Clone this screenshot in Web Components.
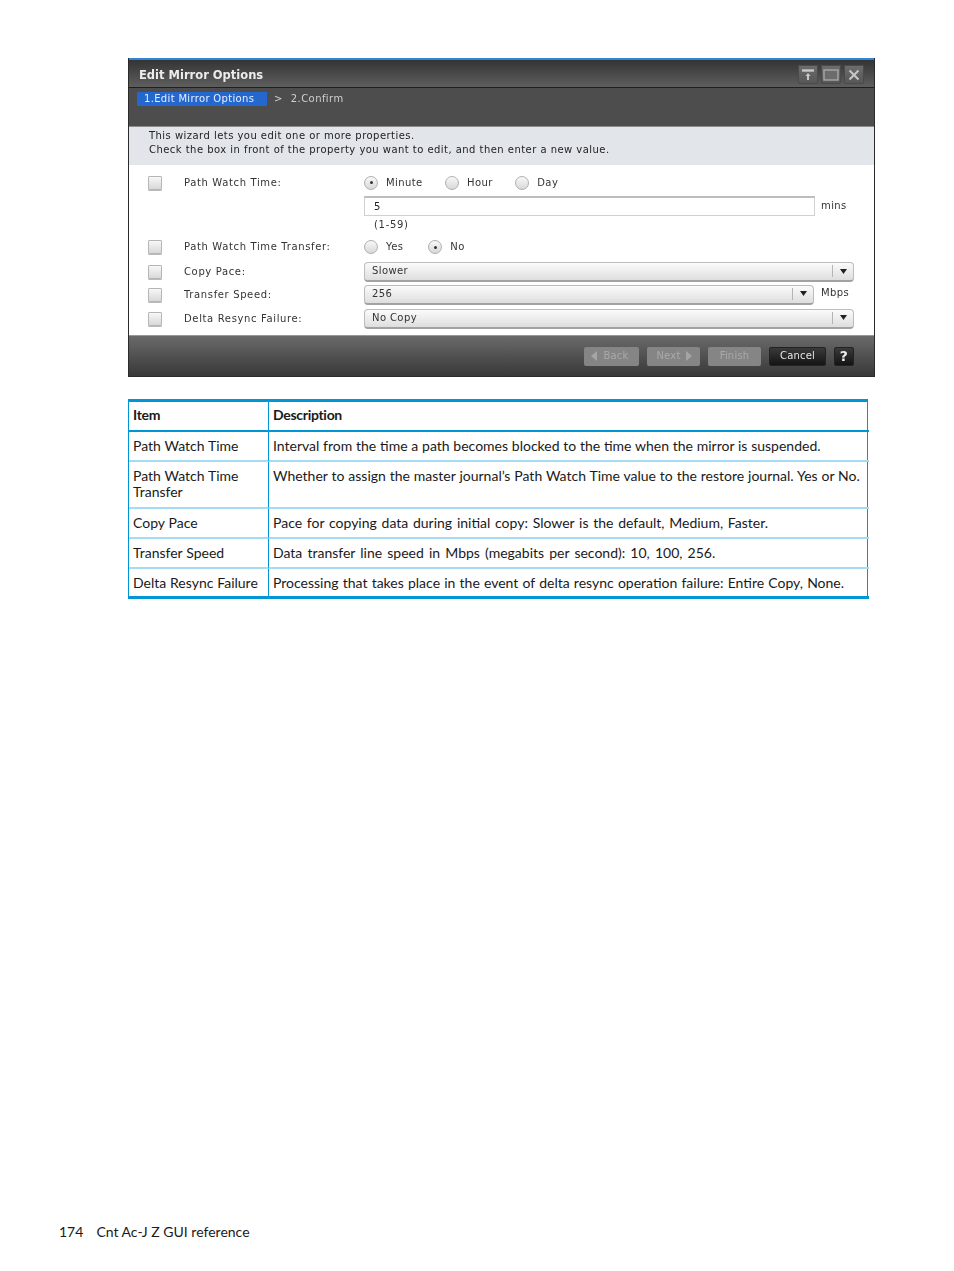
<!DOCTYPE html>
<html lang="en"><head><meta charset="utf-8"><title>Edit Mirror Options</title>
<style>
html,body{margin:0;padding:0;background:#fff}
body{font-family:"Lato","Liberation Sans",sans-serif;color:#1a1a1a}
</style></head><body>
<x-page>
  <x-dialog title-text="Edit Mirror Options">
    <x-row h="23" label="Path Watch Time:">
      <x-radios gap="22.5"><x-radio on>Minute</x-radio><x-radio>Hour</x-radio><x-radio>Day</x-radio></x-radios>
    </x-row>
    <x-row h="23"><x-input value="5" unit="mins"></x-input></x-row>
    <x-row h="15"><x-hint>(1-59)</x-hint></x-row>
    <x-row h="30" label="Path Watch Time Transfer:">
      <x-radios gap="25"><x-radio>Yes</x-radio><x-radio on>No</x-radio></x-radios>
    </x-row>
    <x-row h="19" label="Copy Pace:"><x-select value="Slower"></x-select></x-row>
    <x-row h="27" label="Transfer Speed:"><x-select value="256" unit="Mbps"></x-select></x-row>
    <x-row h="21" label="Delta Resync Failure:"><x-select value="No Copy"></x-select></x-row>
  </x-dialog>
  <x-table>
    <x-cell head>Item</x-cell><x-cell head last>Description</x-cell>
    <x-cell>Path Watch Time</x-cell><x-cell last style="word-spacing:.18px">Interval from the time a path becomes blocked to the time when the mirror is suspended.</x-cell>
    <x-cell tall>Path Watch Time Transfer</x-cell><x-cell tall last style="word-spacing:.3px">Whether to assign the master journal’s Path Watch Time value to the restore journal. Yes or No.</x-cell>
    <x-cell>Copy Pace</x-cell><x-cell last style="word-spacing:1.15px">Pace for copying data during initial copy: Slower is the default, Medium, Faster.</x-cell>
    <x-cell>Transfer Speed</x-cell><x-cell last style="word-spacing:1.55px">Data transfer line speed in Mbps (megabits per second): 10, 100, 256.</x-cell>
    <x-cell end>Delta Resync Failure</x-cell><x-cell end last style="word-spacing:.6px">Processing that takes place in the event of delta resync operation failure: Entire Copy, None.</x-cell>
  </x-table>
  <x-foot></x-foot>
</x-page>
<script>
function def(name,html,init){
  customElements.define(name,class extends HTMLElement{
    constructor(){super();this.attachShadow({mode:'open'}).innerHTML=html;}
    connectedCallback(){if(init)init(this,this.shadowRoot);}
  });
}
const ui='font:10px/12px "DejaVu Sans",sans-serif;';
def('x-page',`<style>:host{display:flex;flex-direction:column;height:1271px;padding:58px 0 0 128px;box-sizing:border-box}</style><slot></slot>`);

def('x-dialog',`<style>
:host{display:block;width:747px;height:319px;box-sizing:border-box;border:1px solid #2b2b2b;border-top:0;${ui}filter:blur(.6px);background:#fff}
.wrap{display:flex;flex-direction:column;height:100%}
.blue{height:2px;background:#2f86d8;flex:none}
.title{height:28px;flex:none;box-sizing:border-box;border-bottom:1px solid #1f1f1f;background:linear-gradient(#343434,#5e5e5e);display:flex;align-items:center;padding:2px 10px 0 10px;justify-content:space-between}
.title b{font:bold 11.5px/14px "DejaVu Sans",sans-serif;color:#ececec}
.btns{display:flex;gap:3px}
.btns span{width:20px;height:19px;border-radius:2px;background:linear-gradient(#6e6e6e,#555);box-shadow:inset 0 0 0 1px #4a4a4a;display:flex;align-items:center;justify-content:center}
.tabs{height:39px;flex:none;box-sizing:border-box;background:#4d4d4d;border-bottom:1px solid #8c8c8c;display:flex;align-items:flex-start;padding:4px 0 0 8px;color:#cfcfcf;letter-spacing:.42px}
.tab{width:130px;height:14px;box-sizing:border-box;background:#2467cf;color:#e6eeff;padding:1px 0 0 7px;white-space:nowrap;letter-spacing:.33px}
.sep{margin:0 8px 0 7px;line-height:14px}.next{line-height:14px}
.intro{height:38px;flex:none;box-sizing:border-box;background:#e2e5ea;padding:2px 0 0 20px;color:#222;line-height:14px;letter-spacing:.46px}
.body{flex:1;padding:6px 0 0 19px;background:#fff;color:#333}
.bar{height:41px;flex:none;box-sizing:border-box;border-top:1px solid #999;background:linear-gradient(#6a6a6a,#383838);display:flex;align-items:center;justify-content:flex-end;padding:0 20px 0 0;gap:8px}
.b{height:19px;box-sizing:border-box;border-radius:2px;display:flex;align-items:center;justify-content:center;gap:5px;background:#858585;color:#a9a9a9;letter-spacing:.2px}
.back{width:55px;padding-right:3px;gap:6px}.nxt{width:53px;padding-left:1px}.fin{width:53px}
.can{width:57px;background:linear-gradient(#3a3a3a,#141414);color:#e5e5e5;border:1px solid #222}
.help{width:20px;background:linear-gradient(#3a3a3a,#141414);color:#eee;font:bold 14px/14px "DejaVu Sans",sans-serif;border:1px solid #222}
</style>
<div class="wrap">
<div class="blue"></div>
<div class="title"><b id="t"></b><div class="btns">
<span><svg width="14" height="12" viewBox="0 0 14 12"><path d="M1 1.5h12" stroke="#c8c8c8" stroke-width="2.4" fill="none"/><path d="M7 4l2.6 3H8v4H6V7H4.4z" fill="#c8c8c8"/></svg></span>
<span><svg width="16" height="12" viewBox="0 0 16 12"><rect x="1" y="1" width="14" height="10" fill="#6c6c6c" stroke="#a8a8a8" stroke-width="1.4"/></svg></span>
<span><svg width="12" height="12" viewBox="0 0 12 12"><path d="M1.5 1.5l9 9M10.5 1.5l-9 9" stroke="#c8c8c8" stroke-width="2" fill="none"/></svg></span>
</div></div>
<div class="tabs"><div class="tab">1.Edit Mirror Options</div><span class="sep">&gt;</span><span class="next">2.Confirm</span></div>
<div class="intro">This wizard lets you edit one or more properties.<br>Check the box in front of the property you want to edit, and then enter a new value.</div>
<div class="body"><slot></slot></div>
<div class="bar">
<div class="b back"><svg width="6" height="10" viewBox="0 0 6 10"><path d="M6 0v10L0 5z" fill="#a5a5a5"/></svg>Back</div>
<div class="b nxt">Next<svg width="6" height="10" viewBox="0 0 6 10"><path d="M0 0v10l6-5z" fill="#a5a5a5"/></svg></div>
<div class="b fin">Finish</div>
<div class="b can">Cancel</div>
<div class="b help">?</div>
</div></div>`,(el,s)=>{s.getElementById('t').textContent=el.getAttribute('title-text')});

def('x-row',`<style>
:host{display:grid;grid-template-columns:36px 180px 1fr;align-items:center;box-sizing:border-box;padding-right:20px}
.cb{width:14px;height:14px;box-sizing:border-box;border:1px solid #b5b5b5;border-radius:1px;background:linear-gradient(#f7f7f7,#d9d9d9);box-shadow:0 1px 0 #bbb}
.lab{white-space:nowrap;letter-spacing:.64px}
.c{min-width:0;letter-spacing:.4px}
</style><div><div id="a"></div></div><div class="lab" id="l"></div><div class="c"><slot></slot></div>`,(el,s)=>{
  el.style.height=el.getAttribute('h')+'px';
  const lab=el.getAttribute('label');
  if(lab){s.getElementById('l').textContent=lab;s.getElementById('a').className='cb';}
});

def('x-radios',`<style>:host{display:flex;align-items:center;gap:var(--g,24px);height:100%}</style><slot></slot>`,(el)=>{el.style.setProperty('--g',(el.getAttribute('gap')||24)+'px')});
def('x-radio',`<style>
:host{display:inline-flex;align-items:center;gap:8px}
.r{width:14px;height:14px;box-sizing:border-box;border-radius:50%;border:1px solid #b0b0b0;background:linear-gradient(#f8f8f8,#d8d8d8);display:flex;align-items:center;justify-content:center;flex:none}
i{width:3px;height:3px;border-radius:50%;background:#333;display:none}
</style><span class="r"><i id="d"></i></span><slot></slot>`,(el,s)=>{if(el.hasAttribute('on'))s.getElementById('d').style.display='block'});

def('x-input',`<style>
:host{display:flex;align-items:center;gap:6px}
.i{width:451px;height:20px;box-sizing:border-box;border:1px solid #d0d0d0;border-top:2px solid #bdbdbd;padding:0 0 0 9px;line-height:17px;background:#fff;color:#222}
</style><div class="i" id="v"></div><span id="u"></span>`,(el,s)=>{s.getElementById('v').textContent=el.getAttribute('value');s.getElementById('u').textContent=el.getAttribute('unit')});

def('x-hint',`<style>:host{display:block;padding-left:10px;letter-spacing:.7px}</style><slot></slot>`);

def('x-select',`<style>
:host{display:flex;align-items:center;gap:7px}
.s{flex:1;height:20px;box-sizing:border-box;border:1px solid #bdbdbd;border-bottom:2px solid #a2a2a2;border-radius:4px;background:linear-gradient(#fbfbfb,#dedede);display:flex;align-items:center;padding:0 0 1px 7px}
.v{flex:1}
.a{width:20px;height:12px;border-left:1px solid #b5b5b5;display:flex;align-items:center;justify-content:center}
.u{position:relative;top:-2px}
</style><div class="s"><span class="v" id="v"></span><span class="a"><svg width="7" height="5" viewBox="0 0 7 5"><path d="M0 0h7L3.5 5z" fill="#222"/></svg></span></div><span class="u" id="u"></span>`,(el,s)=>{
  s.getElementById('v').textContent=el.getAttribute('value');
  const u=el.getAttribute('unit');
  if(u){s.getElementById('u').textContent=u;s.querySelector('.s').style.flex='0 0 450px';}
  else s.getElementById('u').remove();
});

def('x-table',`<style>
:host{display:grid;grid-template-columns:140px 600px;width:740px;box-sizing:border-box;margin-top:22px;border-top:3px solid #0096d6;border-left:1px solid #0096d6;border-right:1px solid #0096d6;
font:14px/16px "Lato",sans-serif;color:#1a1a1a;word-spacing:.25px}
</style><slot></slot>`);
def('x-cell',`<style>
:host{display:block;box-sizing:border-box;height:30px;padding:6px 4px 0 4px;border-bottom:2px solid #a5dcf3;border-right:1px solid #0096d6}
:host([head]){font-weight:700;border-bottom:2px solid #0096d6;padding-top:5px;letter-spacing:-.3px}
:host([tall]){height:47px}
:host([end]){height:30px;border-bottom:3px solid #0096d6}
:host([last]){border-right:0}
</style><slot></slot>`);
def('x-foot',`<style>
:host{display:flex;gap:13px;margin-top:auto;margin-left:-69px;height:47px;font:14px/16px "Lato",sans-serif;color:#1a1a1a;white-space:nowrap}
</style><span>174</span><span>Cnt Ac-J Z GUI reference</span>`);
</script>
</body></html>
